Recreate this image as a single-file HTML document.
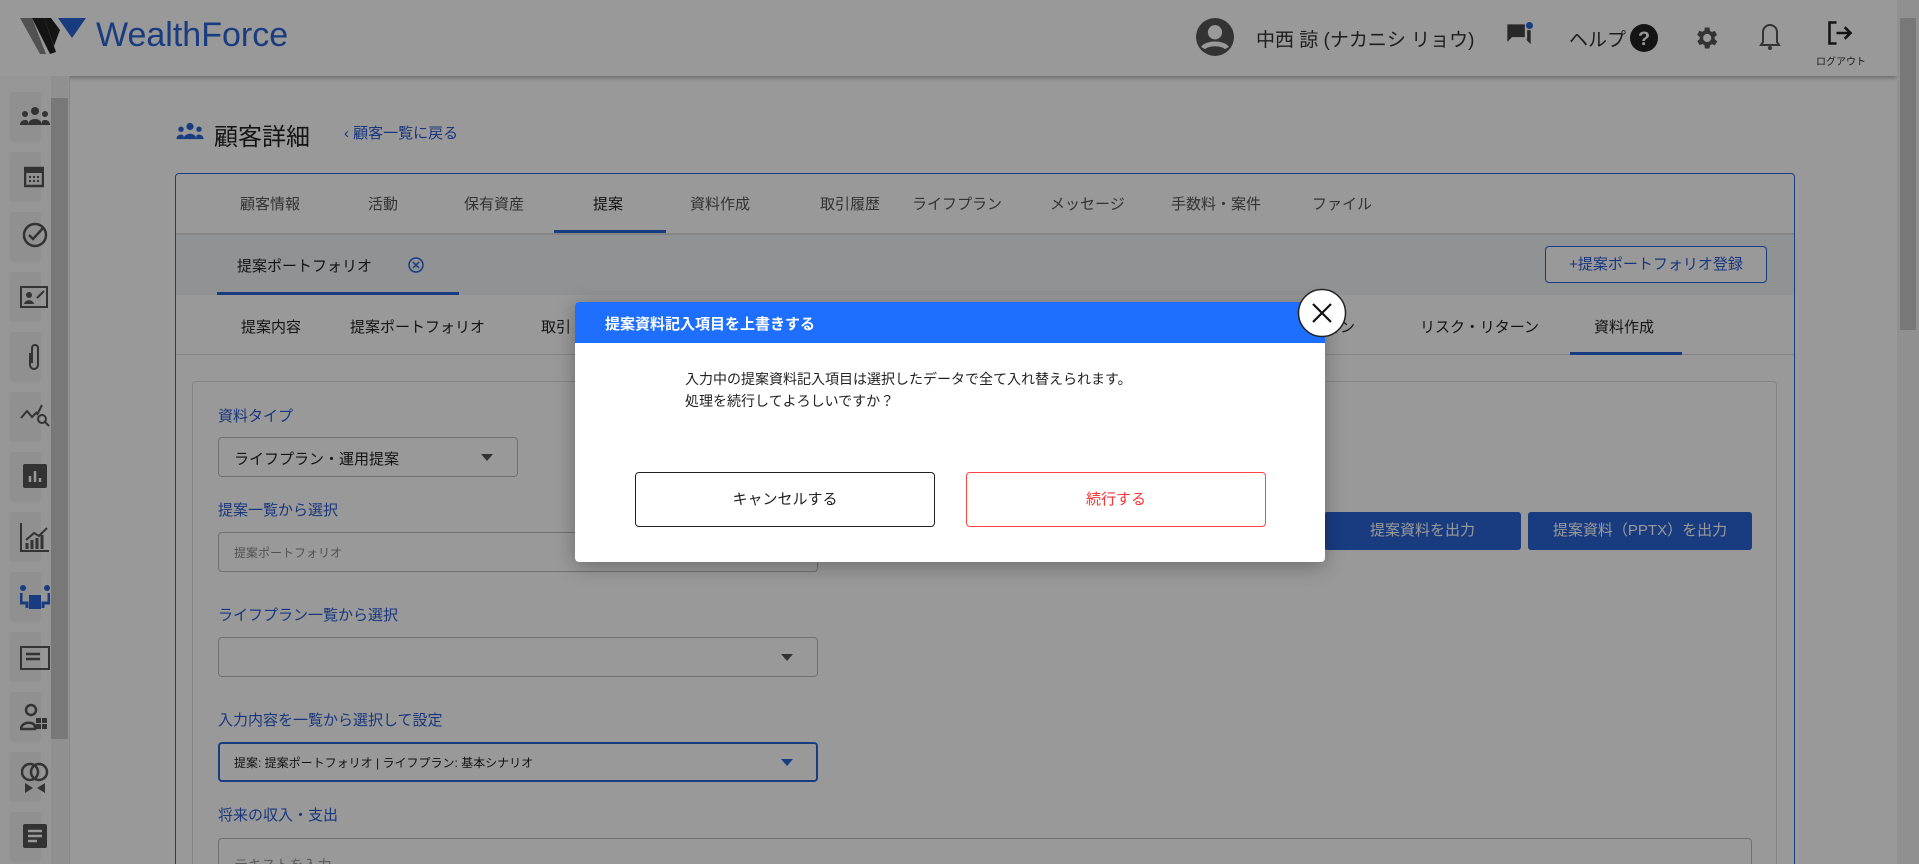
<!DOCTYPE html>
<html><head><meta charset="utf-8"><style>
*{box-sizing:border-box;margin:0;padding:0}
html,body{width:1919px;height:864px;overflow:hidden}
body{background:#fff;font-family:"Liberation Sans","Noto Sans CJK JP",sans-serif;position:relative;color:#222}
.a{position:absolute}
.hdr{left:0;top:0;width:1897px;height:76px;background:#fff;box-shadow:0 2px 4px rgba(0,0,0,.3)}
.side{left:0;top:76px;width:70px;height:788px;background:#fafafa;border-right:1px solid #ddd}
.sb{left:10px;width:31px;height:50px;background:#f0f0f0;border-radius:3px}
.tab{top:193px;font-size:15px;color:#555}
.tab3{top:316px;font-size:15px;color:#222}
.lbl{font-size:15px;color:#2a5ad0}
.sel{border:1px solid #bbb;border-radius:4px;background:#fff}
.arrow{width:0;height:0;border-left:6px solid transparent;border-right:6px solid transparent;border-top:7px solid #555}
.btnb{background:#2a64d6;color:#fff;font-size:15px;text-align:center;border-radius:3px}
.ov{left:0;top:0;width:1919px;height:864px;background:rgba(0,0,0,.4)}
</style></head><body>
<div class="a hdr">
<svg class="a" style="left:20px;top:16px" width="70" height="40" viewBox="0 0 70 40">
<polygon points="0,2 12,2 26,38 20,38" fill="#888"/>
<polygon points="12,2 24,2 36,36 30,38" fill="#222"/>
<polygon points="24,2 34,30 40,14 31,2" fill="#222"/>
<polygon points="38,2 66,2 52,22" fill="#2a64d6"/>
</svg>
<div class="a" style="left:96px;top:16px;font-size:34px;color:#2a64d6;letter-spacing:0px">WealthForce</div>
<svg class="a" style="left:1196px;top:18px" width="38" height="38" viewBox="0 0 24 24"><circle cx="12" cy="12" r="12" fill="#555"/><circle cx="12" cy="9" r="4.5" fill="#fff"/><path d="M4.5 19c2-3.5 13-3.5 15 0" stroke="#fff" stroke-width="3" fill="none"/></svg>
<div class="a" style="left:1256px;top:25px;font-size:19px;color:#333">中西 諒 (ナカニシ リョウ)</div>
<svg class="a" style="left:1504px;top:22px" width="30" height="28" viewBox="0 0 24 24"><path d="M2 2h15v11H6l-4 4z M8 15h10l4 4V7h-3v8" fill="#444"/><circle cx="21" cy="3" r="3" fill="#2a64d6"/></svg>
<div class="a" style="left:1569px;top:25px;font-size:19px;color:#333">ヘルプ</div>
<svg class="a" style="left:1630px;top:24px" width="28" height="28" viewBox="0 0 24 24"><circle cx="12" cy="12" r="12" fill="#222"/><text x="12" y="18" font-size="17" font-weight="bold" fill="#fff" text-anchor="middle" font-family="Liberation Sans">?</text></svg>
<svg class="a" style="left:1692px;top:24px" width="28" height="28" viewBox="0 0 24 24"><path fill="#555" d="M19.4 13a7.5 7.5 0 000-2l2.1-1.6-2-3.5-2.5 1a7 7 0 00-1.7-1L15 3h-4l-.4 2.7a7 7 0 00-1.7 1l-2.5-1-2 3.5L6.6 11a7.5 7.5 0 000 2l-2.1 1.6 2 3.5 2.5-1a7 7 0 001.7 1L11 21h4l.4-2.7a7 7 0 001.7-1l2.5 1 2-3.5zM13 15.5a3.5 3.5 0 110-7 3.5 3.5 0 010 7z"/></svg>
<svg class="a" style="left:1758px;top:22px" width="24" height="30" viewBox="0 0 24 30"><path d="M12 3a7 7 0 00-7 7v10l-2 3h18l-2-3V10a7 7 0 00-7-7z" fill="none" stroke="#555" stroke-width="2"/><circle cx="12" cy="26" r="2" fill="#555"/></svg>
<svg class="a" style="left:1826px;top:19px" width="28" height="28" viewBox="0 0 24 24"><path d="M9 3H3v18h6" fill="none" stroke="#222" stroke-width="2.2"/><path d="M9 12h12M16 7l5 5-5 5" fill="none" stroke="#222" stroke-width="2.2"/></svg>
<div class="a" style="left:1816px;top:53px;font-size:10px;color:#333">ログアウト</div>
</div>
<div class="a side">
<div class="a" style="left:51px;top:0;width:17px;height:788px;background:#f0f0f0"></div>
<div class="a" style="left:51px;top:22px;width:17px;height:641px;background:#c8c8c8"></div>
</div>
<div class="a sb" style="top:92px"></div><div class="a sb" style="top:152px"></div><div class="a sb" style="top:212px"></div><div class="a sb" style="top:272px"></div><div class="a sb" style="top:332px"></div><div class="a sb" style="top:392px"></div><div class="a sb" style="top:452px"></div><div class="a sb" style="top:512px"></div><div class="a sb" style="top:572px"></div><div class="a sb" style="top:632px"></div><div class="a sb" style="top:692px"></div><div class="a sb" style="top:752px"></div><div class="a sb" style="top:812px"></div>
<svg class="a" style="left:20px;top:106px" width="30" height="20" viewBox="0 0 30 20"><circle cx="15" cy="5" r="4" fill="#555"/><circle cx="5" cy="8" r="3" fill="#555"/><circle cx="25" cy="8" r="3" fill="#555"/><path d="M8 19c0-8 14-8 14 0zM0 19c0-6 8-6 8-3v3zM30 19c0-6-8-6-8-3v3z" fill="#555"/></svg>
<svg class="a" style="left:24px;top:164px" width="20" height="24"><rect x="1" y="4" width="18" height="18" fill="none" stroke="#555" stroke-width="2.5"/><rect x="1" y="4" width="18" height="5" fill="#555"/><path d="M5 13h2M9 13h2M13 13h2M5 17h2M9 17h2M13 17h2" stroke="#555" stroke-width="2"/></svg>
<svg class="a" style="left:22px;top:222px" width="26" height="26"><circle cx="13" cy="13" r="11" fill="none" stroke="#555" stroke-width="2.5"/><path d="M7 13l4 4 11-12" fill="none" stroke="#555" stroke-width="2.5"/></svg>
<svg class="a" style="left:20px;top:286px" width="28" height="22"><rect x="1" y="1" width="26" height="20" fill="none" stroke="#555" stroke-width="2"/><circle cx="9" cy="9" r="3" fill="#555"/><path d="M4 18c1-5 9-5 10 0z" fill="#555"/><path d="M17 12l7-7" stroke="#555" stroke-width="2"/></svg>
<svg class="a" style="left:27px;top:343px" width="14" height="28"><path d="M3 10v12a4 4 0 008 0V5a3 3 0 00-6 0v15" fill="none" stroke="#555" stroke-width="2"/></svg>
<svg class="a" style="left:20px;top:403px" width="30" height="26"><path d="M1 15l6-7 5 6 5-5M22 2l-5 10" fill="none" stroke="#555" stroke-width="2"/><circle cx="22" cy="16" r="4" fill="none" stroke="#555" stroke-width="2"/><path d="M25 19l4 4" stroke="#555" stroke-width="2"/></svg>
<svg class="a" style="left:23px;top:464px" width="24" height="24"><rect width="24" height="24" rx="2" fill="#555"/><path d="M7 18v-6M12 18V7M17 18v-4" stroke="#fff" stroke-width="2.5"/></svg>
<svg class="a" style="left:20px;top:522px" width="30" height="30"><path d="M1 1v28h28" fill="none" stroke="#555" stroke-width="2"/><path d="M7 27v-6M12 27v-9M17 27v-11M22 27v-14" stroke="#555" stroke-width="3"/><path d="M6 18l8-7 5 3 8-8" fill="none" stroke="#555" stroke-width="2"/></svg>
<svg class="a" style="left:20px;top:585px" width="30" height="24"><circle cx="3" cy="3" r="3" fill="#2a64d6"/><circle cx="27" cy="3" r="3" fill="#2a64d6"/><path d="M1 8v10h6v5M29 8v10h-6v5" stroke="#2a64d6" stroke-width="3" fill="none"/><rect x="9" y="10" width="12" height="14" fill="#2a64d6"/></svg>
<svg class="a" style="left:20px;top:646px" width="30" height="24"><rect x="1" y="1" width="28" height="22" fill="none" stroke="#555" stroke-width="2"/><path d="M6 8h14M6 13h14" stroke="#555" stroke-width="2.5"/></svg>
<svg class="a" style="left:20px;top:703px" width="28" height="28"><circle cx="11" cy="7" r="5" fill="none" stroke="#555" stroke-width="2.5"/><path d="M1 26c0-8 14-8 14-2v2z" fill="none" stroke="#555" stroke-width="2.5"/><rect x="16" y="15" width="5" height="5" fill="#555"/><rect x="22" y="15" width="5" height="5" fill="#555"/><rect x="16" y="21" width="5" height="5" fill="#555"/><rect x="22" y="21" width="5" height="5" fill="#555"/></svg>
<svg class="a" style="left:21px;top:761px" width="28" height="32"><circle cx="9" cy="11" r="8" fill="none" stroke="#555" stroke-width="2.5"/><circle cx="18" cy="11" r="8" fill="none" stroke="#555" stroke-width="2.5"/><path d="M4 22l8 5-8 5zM24 22l-8 5 8 5z" fill="#555"/></svg>
<svg class="a" style="left:23px;top:824px" width="24" height="24"><rect width="24" height="24" rx="2" fill="#555"/><path d="M5 7h14M5 12h14M5 17h9" stroke="#fff" stroke-width="2.5"/></svg>
<div class="a" style="left:1897px;top:0;width:22px;height:864px;background:#f0f0f0"></div>
<div class="a" style="left:1900px;top:18px;width:16px;height:312px;background:#c8c8c8"></div>
<svg class="a" style="left:175px;top:122px" width="30" height="18" viewBox="0 0 30 20"><circle cx="15" cy="5" r="4" fill="#2a64d6"/><circle cx="5" cy="8" r="3" fill="#2a64d6"/><circle cx="25" cy="8" r="3" fill="#2a64d6"/><path d="M8 19c0-8 14-8 14 0zM0 19c0-6 8-6 8-3v3zM30 19c0-6-8-6-8-3v3z" fill="#2a64d6"/></svg>
<div class="a" style="left:214px;top:117px;font-size:24px;color:#222">顧客詳細</div>
<div class="a" style="left:344px;top:122px;font-size:15px;color:#2a5ad0">‹ 顧客一覧に戻る</div>
<div class="a" style="left:175px;top:173px;width:1620px;height:720px;border:1px solid #2a64d6;border-radius:4px;background:#fff"></div>
<div class="a" style="left:176px;top:233px;width:1618px;height:62px;background:#f1f3f7;border-top:2px solid #ddd"></div>
<div class="a tab" style="left:240px">顧客情報</div><div class="a tab" style="left:368px">活動</div><div class="a tab" style="left:464px">保有資産</div><div class="a tab" style="left:593px;color:#222">提案</div><div class="a tab" style="left:690px">資料作成</div><div class="a tab" style="left:820px">取引履歴</div><div class="a tab" style="left:912px">ライフプラン</div><div class="a tab" style="left:1050px">メッセージ</div><div class="a tab" style="left:1171px">手数料・案件</div><div class="a tab" style="left:1312px">ファイル</div>
<div class="a" style="left:554px;top:230px;width:112px;height:3px;background:#2a64d6"></div>
<div class="a" style="left:237px;top:255px;font-size:15px;color:#222">提案ポートフォリオ</div>
<svg class="a" style="left:408px;top:257px" width="16" height="16"><circle cx="8" cy="8" r="7" fill="none" stroke="#2a64d6" stroke-width="1.5"/><path d="M5 5l6 6M11 5l-6 6" stroke="#2a64d6" stroke-width="1.5"/></svg>
<div class="a" style="left:217px;top:292px;width:242px;height:3px;background:#2a64d6"></div>
<div class="a" style="left:1545px;top:246px;width:222px;height:37px;border:1px solid #2a64d6;border-radius:4px;color:#2a5ad0;font-size:15px;text-align:center;line-height:35px;background:#fff">+提案ポートフォリオ登録</div>
<div class="a" style="left:176px;top:295px;width:1618px;height:60px;border-bottom:1px solid #ddd"></div>
<div class="a tab3" style="left:241px">提案内容</div><div class="a tab3" style="left:350px">提案ポートフォリオ</div><div class="a tab3" style="left:541px">取引</div><div class="a tab3" style="left:1310px">ション</div><div class="a tab3" style="left:1420px">リスク・リターン</div><div class="a tab3" style="left:1594px">資料作成</div>
<div class="a" style="left:1570px;top:352px;width:112px;height:3px;background:#2a64d6"></div>
<div class="a" style="left:192px;top:381px;width:1585px;height:500px;border:1px solid #ddd;border-radius:4px"></div>
<div class="a lbl" style="left:218px;top:405px">資料タイプ</div>
<div class="a sel" style="left:218px;top:437px;width:300px;height:40px"><div class="a" style="left:15px;top:10px;font-size:15px">ライフプラン・運用提案</div><div class="a arrow" style="left:262px;top:16px"></div></div>
<div class="a lbl" style="left:218px;top:499px">提案一覧から選択</div>
<div class="a sel" style="left:218px;top:532px;width:600px;height:40px"><div class="a" style="left:15px;top:11px;font-size:12px;color:#888">提案ポートフォリオ</div></div>
<div class="a btnb" style="left:1324px;top:512px;width:197px;height:38px;line-height:38px">提案資料を出力</div>
<div class="a btnb" style="left:1528px;top:512px;width:224px;height:38px;line-height:38px">提案資料（PPTX）を出力</div>
<div class="a lbl" style="left:218px;top:604px">ライフプラン一覧から選択</div>
<div class="a sel" style="left:218px;top:637px;width:600px;height:40px"><div class="a arrow" style="left:562px;top:16px"></div></div>
<div class="a lbl" style="left:218px;top:709px">入力内容を一覧から選択して設定</div>
<div class="a sel" style="left:218px;top:742px;width:600px;height:40px;border:2px solid #2a64d6"><div class="a" style="left:14px;top:10px;font-size:12px">提案: 提案ポートフォリオ | ライフプラン: 基本シナリオ</div><div class="a arrow" style="left:561px;top:15px;border-top-color:#2a64d6"></div></div>
<div class="a lbl" style="left:218px;top:804px">将来の収入・支出</div>
<div class="a sel" style="left:218px;top:838px;width:1534px;height:60px"><div class="a" style="left:15px;top:16px;font-size:14px;color:#999">テキストを入力</div></div>
<div class="a ov"></div>
<div class="a" style="left:575px;top:302px;width:750px;height:260px;background:#fff;border-radius:4px;box-shadow:0 4px 20px rgba(0,0,0,.3);overflow:hidden">
<div style="height:41px;background:#1e6fff;color:#fff;font-size:15px;font-weight:bold;padding:11px 30px">提案資料記入項目を上書きする</div>
<div class="a" style="left:110px;top:66px;font-size:14px;line-height:22px;color:#222">入力中の提案資料記入項目は選択したデータで全て入れ替えられます。<br>処理を続行してよろしいですか？</div>
<div class="a" style="left:60px;top:170px;width:300px;height:55px;border:1px solid #222;border-radius:4px;text-align:center;line-height:53px;font-size:15px">キャンセルする</div>
<div class="a" style="left:391px;top:170px;width:300px;height:55px;border:1px solid #f44;border-radius:4px;text-align:center;line-height:53px;font-size:15px;color:#f33">続行する</div>
</div>
<svg class="a" style="left:1297px;top:288px" width="50" height="50"><circle cx="25" cy="25" r="23.5" fill="#fff" stroke="#222" stroke-width="1.5"/><path d="M16 16l18 18M34 16L16 34" stroke="#111" stroke-width="2.2"/></svg>
</body></html>
